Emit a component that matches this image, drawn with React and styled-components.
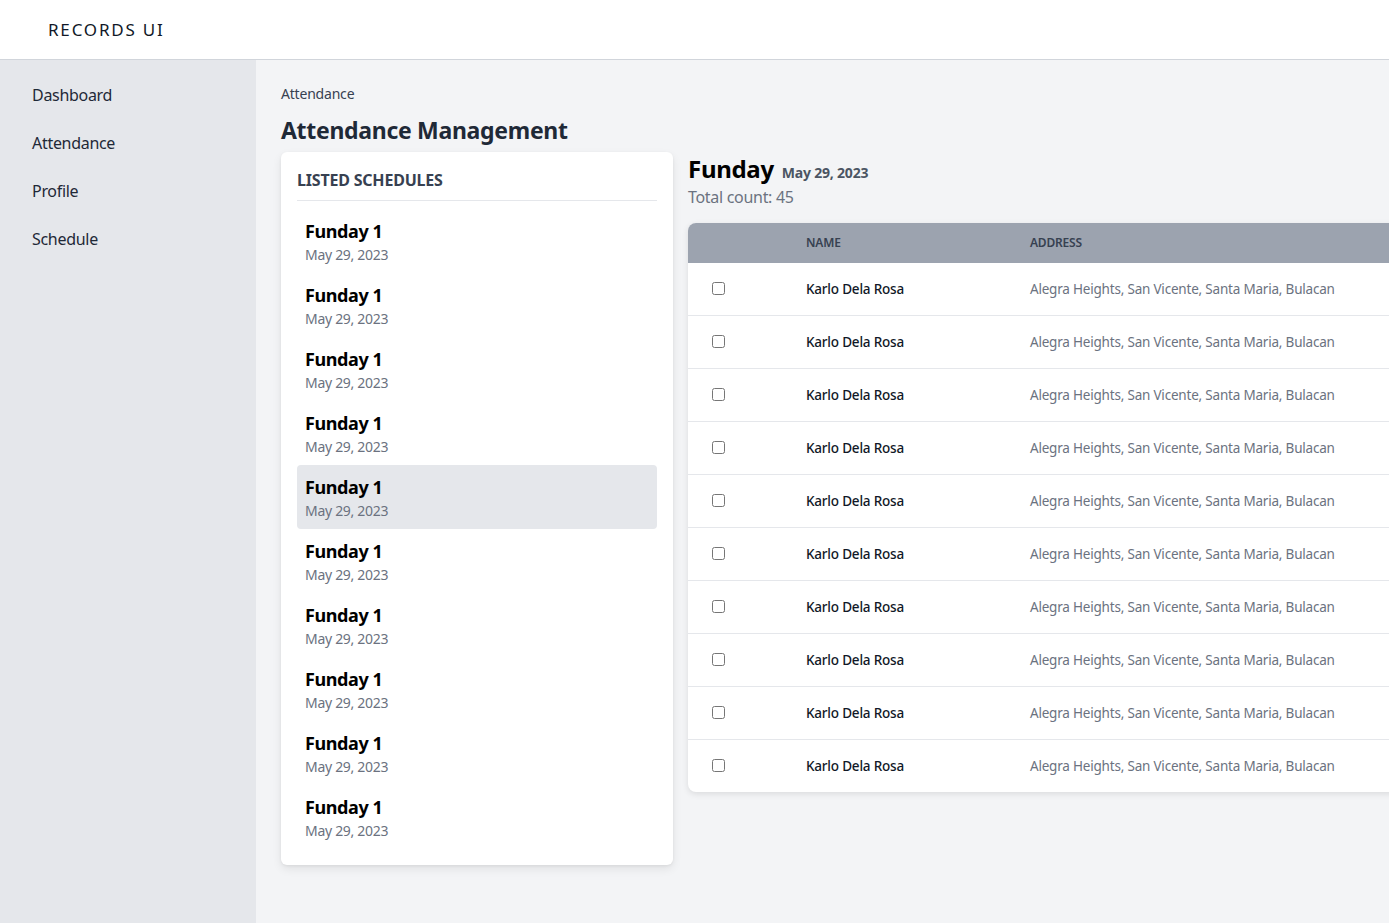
import React, { useState } from "react";
import styled, { createGlobalStyle } from "styled-components";

const GlobalStyle = createGlobalStyle`
  html, body {
    margin: 0;
    padding: 0;
    overflow: hidden;
  }
  body {
    font-family: "Segoe UI", "Noto Sans", "Open Sans", sans-serif;
    background: #f3f4f6;
    color: #1f2937;
  }
  * {
    box-sizing: border-box;
  }
`;

const Page = styled.div`
  display: flex;
  flex-direction: column;
  height: 923px;
  width: 1389px;
  overflow: hidden;
`;

const TopBar = styled.header`
  height: 60px;
  flex-shrink: 0;
  display: flex;
  align-items: center;
  padding-left: 48px;
  background: white;
  border-bottom: 1px solid #d1d5db;
`;

const Brand = styled.span`
  font-size: 17px;
  letter-spacing: 1.8px;
  color: #111827;
`;

const Body = styled.div`
  display: flex;
  flex: 1;
  min-height: 0;
`;

const Sidebar = styled.nav`
  width: 256px;
  flex-shrink: 0;
  background: #e5e7eb;
  padding-top: 11px;
  display: flex;
  flex-direction: column;
`;

const NavItem = styled.a`
  display: block;
  padding: 12px 32px;
  font-size: 16px;
  letter-spacing: -0.3px;
  line-height: 24px;
  color: #1f2937;
  text-decoration: none;
  cursor: pointer;
`;

const Main = styled.main`
  flex: 1;
  min-width: 0;
  padding: 24px 0 0 25px;
  overflow: hidden;
`;

const Crumb = styled.div`
  font-size: 14px;
  letter-spacing: -0.2px;
  line-height: 20px;
  color: #374151;
`;

const Title = styled.h1`
  margin: 10px 0 6px;
  font-size: 23px;
  letter-spacing: -0.3px;
  line-height: 32px;
  font-weight: 700;
  color: #1f2937;
`;

const Columns = styled.div`
  display: flex;
  align-items: flex-start;
  gap: 15px;
`;

const Card = styled.section`
  width: 392px;
  flex-shrink: 0;
  background: white;
  border-radius: 6px;
  padding: 16px;
  box-shadow: 0 4px 10px rgba(0, 0, 0, 0.08), 0 1px 3px rgba(0, 0, 0, 0.06);
`;

const CardHead = styled.h2`
  margin: 0;
  padding-bottom: 8px;
  border-bottom: 1px solid #e5e7eb;
  font-size: 16px;
  letter-spacing: -0.2px;
  line-height: 24px;
  font-weight: 700;
  text-transform: uppercase;
  color: #374151;
`;

const List = styled.ul`
  list-style: none;
  margin: 8px 0 0;
  padding: 0;
`;

const ScheduleItem = styled.li`
  padding: 8px;
  border-radius: 4px;
  cursor: pointer;
  background: ${(p) => (p.$active ? "#e5e7eb" : "transparent")};
`;

const ItemName = styled.div`
  font-size: 18px;
  letter-spacing: -0.4px;
  line-height: 28px;
  font-weight: 700;
  color: #000;
`;

const ItemDate = styled.div`
  font-size: 14px;
  letter-spacing: -0.3px;
  line-height: 20px;
  color: #6b7280;
`;

const Detail = styled.section`
  flex-shrink: 0;
  width: 820px;
  padding-top: 1px;
`;

const DetailTitle = styled.div`
  height: 32px;
  font-size: 24px;
  letter-spacing: -0.3px;
  line-height: 32px;
  font-weight: 700;
  color: #000;
  & span {
    margin-left: 2px;
    font-size: 14px;
    line-height: 1;
    letter-spacing: -0.2px;
    color: #4b5563;
  }
`;

const Count = styled.div`
  font-size: 16px;
  letter-spacing: -0.3px;
  line-height: 24px;
  color: #6b7280;
`;

const TableWrap = styled.div`
  margin-top: 14px;
  background: white;
  border-radius: 8px 0 0 8px;
  overflow: hidden;
  box-shadow: 0 2px 6px rgba(0, 0, 0, 0.1);
`;

const Table = styled.table`
  width: 100%;
  border-collapse: collapse;
  font-size: 13.5px;
  letter-spacing: -0.2px;
`;

const Th = styled.th`
  text-align: left;
  padding: 12px 24px;
  height: 40px;
  background: #9ca3af;
  font-size: 12px;
  line-height: 16px;
  font-weight: 600;
  text-transform: uppercase;
  color: #374151;
  width: ${(p) => p.$w || "auto"};
`;

const Tr = styled.tr`
  border-top: ${(p) => (p.$first ? "none" : "1px solid #e5e7eb")};
`;

const Td = styled.td`
  padding: 16px 24px;
  line-height: 20px;
  color: ${(p) => (p.$muted ? "#6b7280" : "#111827")};
  font-weight: ${(p) => (p.$muted ? 400 : 500)};
  white-space: nowrap;
`;

const Check = styled.input`
  margin: 0 0 4px;
  width: 13px;
  height: 13px;
  vertical-align: middle;
`;

const schedules = Array.from({ length: 10 }, (_, i) => ({
  id: i,
  name: "Funday 1",
  date: "May 29, 2023",
}));

const attendees = Array.from({ length: 10 }, (_, i) => ({
  id: i,
  name: "Karlo Dela Rosa",
  address: "Alegra Heights, San Vicente, Santa Maria, Bulacan",
}));

const App = () => {
  const [selected, setSelected] = useState(4);

  return (
    <Page>
      <GlobalStyle />
      <TopBar>
        <Brand>RECORDS UI</Brand>
      </TopBar>
      <Body>
        <Sidebar>
          <NavItem>Dashboard</NavItem>
          <NavItem>Attendance</NavItem>
          <NavItem>Profile</NavItem>
          <NavItem>Schedule</NavItem>
        </Sidebar>
        <Main>
          <Crumb>Attendance</Crumb>
          <Title>Attendance Management</Title>
          <Columns>
            <Card>
              <CardHead>Listed Schedules</CardHead>
              <List>
                {schedules.map((s) => (
                  <ScheduleItem
                    key={s.id}
                    $active={selected === s.id}
                    onClick={() => setSelected(s.id)}
                  >
                    <ItemName>{s.name}</ItemName>
                    <ItemDate>{s.date}</ItemDate>
                  </ScheduleItem>
                ))}
              </List>
            </Card>
            <Detail>
              <DetailTitle>
                Funday <span>May 29, 2023</span>
              </DetailTitle>
              <Count>Total count: 45</Count>
              <TableWrap>
                <Table>
                  <thead>
                    <tr>
                      <Th $w="94px"></Th>
                      <Th $w="224px">Name</Th>
                      <Th>Address</Th>
                    </tr>
                  </thead>
                  <tbody>
                    {attendees.map((a, i) => (
                      <Tr key={a.id} $first={i === 0}>
                        <Td>
                          <Check type="checkbox" />
                        </Td>
                        <Td>{a.name}</Td>
                        <Td $muted>{a.address}</Td>
                      </Tr>
                    ))}
                  </tbody>
                </Table>
              </TableWrap>
            </Detail>
          </Columns>
        </Main>
      </Body>
    </Page>
  );
};

export default App;
